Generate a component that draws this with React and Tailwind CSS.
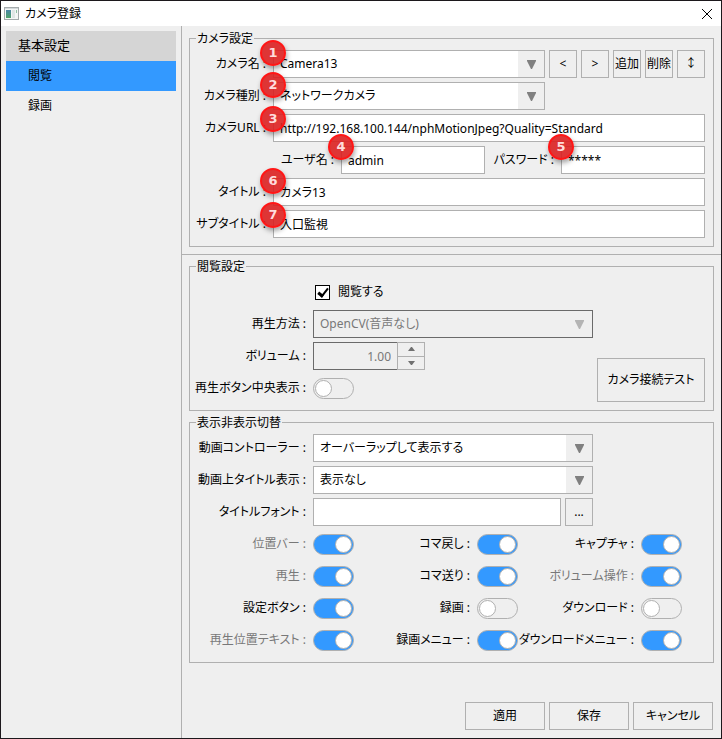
import { useState } from 'react';
import clsx from 'clsx';

const NAV_ITEMS = ['閲覧', '録画'];

const TOGGLES = [
  { id: 'seek-bar', label: '位置バー', on: true, muted: true },
  { id: 'frame-back', label: 'コマ戻し', on: true },
  { id: 'capture', label: 'キャプチャ', on: true },
  { id: 'play', label: '再生', on: true, muted: true },
  { id: 'frame-forward', label: 'コマ送り', on: true },
  { id: 'volume-control', label: 'ボリューム操作', on: true, muted: true },
  { id: 'settings-button', label: '設定ボタン', on: true },
  { id: 'record', label: '録画', on: false },
  { id: 'download', label: 'ダウンロード', on: false },
  { id: 'position-text', label: '再生位置テキスト', on: true, muted: true },
  { id: 'record-menu', label: '録画メニュー', on: true },
  { id: 'download-menu', label: 'ダウンロードメニュー', on: true },
];

const BUTTON = 'border border-[#b0b0b0] bg-[#efefef] text-center hover:bg-[#e4e4e4]';
const INPUT = 'h-7 w-full min-w-0 border border-[#b0b0b0] bg-white px-1.5 outline-none focus:border-[#3399ff]';

const Badge = ({ children, className = '-top-2.5' }) => (
  <span
    className={clsx(
      'pointer-events-none absolute -left-[13px] z-10 flex size-[26px] items-center justify-center rounded-full border-2 border-[#ff1616] bg-[#dc2020]/90 font-[DejaVu_Sans,sans-serif] text-[13px] font-bold text-[#ffdcdc] shadow-[1px_3px_5px_rgba(0,0,0,0.35)]',
      className
    )}
  >
    {children}
  </span>
);

const Group = ({ title, children }) => (
  <fieldset className="min-w-0 border border-[#b0b0b0] pt-[3px] pr-2 pb-2">
    <legend className="ml-1.5 px-px leading-[17px]">{title}</legend>
    {children}
  </fieldset>
);

const Label = ({ htmlFor, muted, className = 'w-[123px]', children }) => (
  <label
    htmlFor={htmlFor}
    className={clsx('shrink-0 pr-[7px] text-right whitespace-nowrap', muted && 'text-[#787878]', className)}
  >
    {children} :
  </label>
);

const SelectBox = ({ id, options, disabled }) => (
  <div className="relative min-w-0 flex-1">
    <select
      id={id}
      disabled={disabled}
      className="block h-7 w-full appearance-none border border-[#b0b0b0] bg-white pr-7 pl-1.5 opacity-100 outline-none disabled:border-[#6a6a6a] disabled:bg-[#efefef] disabled:text-[#787878]"
    >
      {options.map((option) => (
        <option key={option}>{option}</option>
      ))}
    </select>
    <span className="pointer-events-none absolute inset-y-px right-px flex w-[26px] items-center justify-center bg-[#efefef]">
      <svg
        viewBox="0 0 9 9"
        className={clsx('size-[9px]', disabled ? 'fill-[#b4b4b4]' : 'fill-[#808080]')}
      >
        <path d="M0 0h9v1L5 9H4L0 1z" />
      </svg>
    </span>
  </div>
);

const Toggle = ({ id, defaultChecked }) => (
  <input
    id={id}
    type="checkbox"
    role="switch"
    defaultChecked={defaultChecked}
    className="flex h-[21px] w-[41px] shrink-0 appearance-none items-center rounded-full border border-[#b0b0b0] bg-[#efefef] px-px before:size-[17px] before:rounded-full before:border before:border-[#b0b0b0] before:bg-white checked:justify-end checked:bg-[#3399ff]"
  />
);

const App = () => {
  const [page, setPage] = useState('閲覧');

  return (
    <div
      lang="ja"
      className='flex min-h-screen flex-col border border-[#1c181c] bg-[#efefef] font-["Noto_Sans","Noto_Sans_CJK_JP",sans-serif] text-xs text-black [font-feature-settings:"palt"]'
    >
      <header className="flex h-[25px] items-center bg-white pr-2 pl-[3px]">
        <svg viewBox="0 0 15 13" className="h-[13px] w-[15px]">
          <defs>
            <linearGradient id="app-icon" x1="0" y1="0" x2="0" y2="1">
              <stop offset="0" stopColor="#4a86a8" />
              <stop offset="1" stopColor="#4fa36a" />
            </linearGradient>
          </defs>
          <rect x="0.5" y="0.5" width="14" height="12" fill="#f4f6f6" stroke="#a4aaac" />
          <path d="M1 1h13v1H1z" fill="#d3d8da" />
          <path d="M2 3h5v8H2z" fill="url(#app-icon)" />
          <path d="M8 3h3v8H8z" fill="#dfe6e6" />
          <path d="M12 3h1v3h-1z" fill="#8fc0a4" />
        </svg>
        <h1 className="ml-1.5 flex-1">カメラ登録</h1>
        <button type="button" aria-label="閉じる" className="p-px">
          <svg viewBox="0 0 10 10" className="size-2.5 stroke-black">
            <path d="M0 0l10 10M10 0L0 10" />
          </svg>
        </button>
      </header>

      <div className="flex flex-1">
        <nav className="w-[181px] shrink-0 border-r border-[#b0b0b0] p-[5px]">
          <h2 className="flex h-[30px] items-center bg-[#d5d5d5] pl-3 text-[13px]">基本設定</h2>
          {NAV_ITEMS.map((item) => (
            <button
              key={item}
              type="button"
              onClick={() => setPage(item)}
              className={clsx(
                'flex h-[30px] w-full items-center pl-[22px]',
                page === item && 'bg-[#3399ff]'
              )}
            >
              {item}
            </button>
          ))}
        </nav>

        <form className="flex min-w-0 flex-1 flex-col" onSubmit={(event) => event.preventDefault()}>
          <div className="border-b border-[#b0b0b0] px-[7px] pt-1 pb-[7px]">
            <Group title="カメラ設定">
              <div className="flex flex-col gap-1">
                <div className="flex items-center">
                  <Label htmlFor="camera-name" className="w-[83px]">カメラ名</Label>
                  <div className="relative flex min-w-0 flex-1 gap-1">
                    <SelectBox id="camera-name" options={['Camera13']} />
                    <Badge>1</Badge>
                    {['<', '>', '追加', '削除', '↕'].map((text) => (
                      <button key={text} type="button" className={clsx(BUTTON, 'h-7 w-7 whitespace-nowrap')}>
                        {text}
                      </button>
                    ))}
                  </div>
                </div>
                <div className="flex items-center">
                  <Label htmlFor="camera-type" className="w-[83px]">カメラ種別</Label>
                  <div className="relative flex min-w-0 flex-1 pr-40">
                    <SelectBox id="camera-type" options={['ネットワークカメラ']} />
                    <Badge>2</Badge>
                  </div>
                </div>
                <div className="flex items-center">
                  <Label htmlFor="camera-url" className="w-[83px]">カメラURL</Label>
                  <div className="relative flex-1">
                    <input
                      id="camera-url"
                      type="text"
                      defaultValue="http://192.168.100.144/nphMotionJpeg?Quality=Standard"
                      className={INPUT}
                    />
                    <Badge className="-top-2">3</Badge>
                  </div>
                </div>
                <div className="flex items-center pl-[83px]">
                  <Label htmlFor="user-name" className="w-[68px]">ユーザ名</Label>
                  <div className="relative flex-1">
                    <input id="user-name" type="text" defaultValue="admin" className={INPUT} />
                    <Badge className="-top-3">4</Badge>
                  </div>
                  <Label htmlFor="password" className="w-[76px]">パスワード</Label>
                  <div className="relative flex-1">
                    <input id="password" type="text" defaultValue="*****" className={INPUT} />
                    <Badge className="-top-3">5</Badge>
                  </div>
                </div>
                <div className="flex items-center">
                  <Label htmlFor="title" className="w-[83px]">タイトル</Label>
                  <div className="relative flex-1">
                    <input id="title" type="text" defaultValue="カメラ13" className={INPUT} />
                    <Badge>6</Badge>
                  </div>
                </div>
                <div className="flex items-center">
                  <Label htmlFor="subtitle" className="w-[83px]">サブタイトル</Label>
                  <div className="relative flex-1">
                    <input id="subtitle" type="text" defaultValue="入口監視" className={INPUT} />
                    <Badge className="-top-2">7</Badge>
                  </div>
                </div>
              </div>
            </Group>
          </div>

          <div className="flex flex-col gap-[3px] px-[7px] pt-[3px]">
            <Group title="閲覧設定">
              <div className="flex items-end gap-1">
                <div className="flex min-w-0 flex-1 flex-col gap-1">
                  <div className="flex h-7 items-center gap-2 pl-[125px]">
                    <input
                      id="enable-view"
                      type="checkbox"
                      defaultChecked
                      className="flex size-[15px] appearance-none items-center justify-center border border-black bg-white checked:before:h-[11px] checked:before:w-1.5 checked:before:-translate-y-px checked:before:rotate-[38deg] checked:before:border-r-2 checked:before:border-b-3 checked:before:border-black"
                    />
                    <label htmlFor="enable-view">閲覧する</label>
                  </div>
                  <div className="flex items-center">
                    <Label htmlFor="play-method">再生方法</Label>
                    <SelectBox id="play-method" options={['OpenCV(音声なし)']} disabled />
                  </div>
                  <div className="flex items-center">
                    <Label htmlFor="volume">ボリューム</Label>
                    <input
                      id="volume"
                      type="text"
                      defaultValue="1.00"
                      disabled
                      className="h-7 w-21 border border-r-0 border-[#6a6a6a] px-1.5 text-right text-[#787878]"
                    />
                    <div className="flex h-7 w-7 flex-col divide-y divide-[#b0b0b0] border border-[#b0b0b0]">
                      <button type="button" aria-label="上げる" className="flex flex-1 items-center justify-center">
                        <svg viewBox="0 0 7 4" className="h-1 w-[7px] fill-[#707070]">
                          <path d="M3 0h1l3 4H0z" />
                        </svg>
                      </button>
                      <button type="button" aria-label="下げる" className="flex flex-1 items-center justify-center">
                        <svg viewBox="0 0 7 4" className="h-1 w-[7px] fill-[#707070]">
                          <path d="M0 0h7L4 4H3z" />
                        </svg>
                      </button>
                    </div>
                  </div>
                  <div className="flex h-7 items-center">
                    <Label htmlFor="center-play">再生ボタン中央表示</Label>
                    <Toggle id="center-play" />
                  </div>
                </div>
                <button type="button" className={clsx(BUTTON, 'h-11 w-27 shrink-0')}>
                  カメラ接続テスト
                </button>
              </div>
            </Group>

            <Group title="表示非表示切替">
              <div className="flex flex-col gap-1 pr-28">
                <div className="flex items-center">
                  <Label htmlFor="controller">動画コントローラー</Label>
                  <SelectBox id="controller" options={['オーバーラップして表示する']} />
                </div>
                <div className="flex items-center">
                  <Label htmlFor="overlay-title">動画上タイトル表示</Label>
                  <SelectBox id="overlay-title" options={['表示なし']} />
                </div>
                <div className="flex items-center">
                  <Label htmlFor="title-font">タイトルフォント</Label>
                  <div className="flex min-w-0 flex-1 gap-1">
                    <input id="title-font" type="text" className={INPUT} />
                    <button type="button" className={clsx(BUTTON, 'h-7 w-7 shrink-0')}>
                      ...
                    </button>
                  </div>
                </div>
              </div>
              <div className="mt-1 grid grid-cols-[repeat(3,164px)] gap-y-1">
                {TOGGLES.map(({ id, label, on, muted }) => (
                  <div key={id} className="flex h-7 items-center">
                    <Label htmlFor={id} muted={muted}>{label}</Label>
                    <Toggle id={id} defaultChecked={on} />
                  </div>
                ))}
              </div>
            </Group>
          </div>

          <div className="mt-auto flex justify-end gap-1 px-2 pb-2">
            {['適用', '保存', 'キャンセル'].map((text) => (
              <button key={text} type="button" className={clsx(BUTTON, 'h-7 w-20')}>
                {text}
              </button>
            ))}
          </div>
        </form>
      </div>
    </div>
  );
};

export default App;
